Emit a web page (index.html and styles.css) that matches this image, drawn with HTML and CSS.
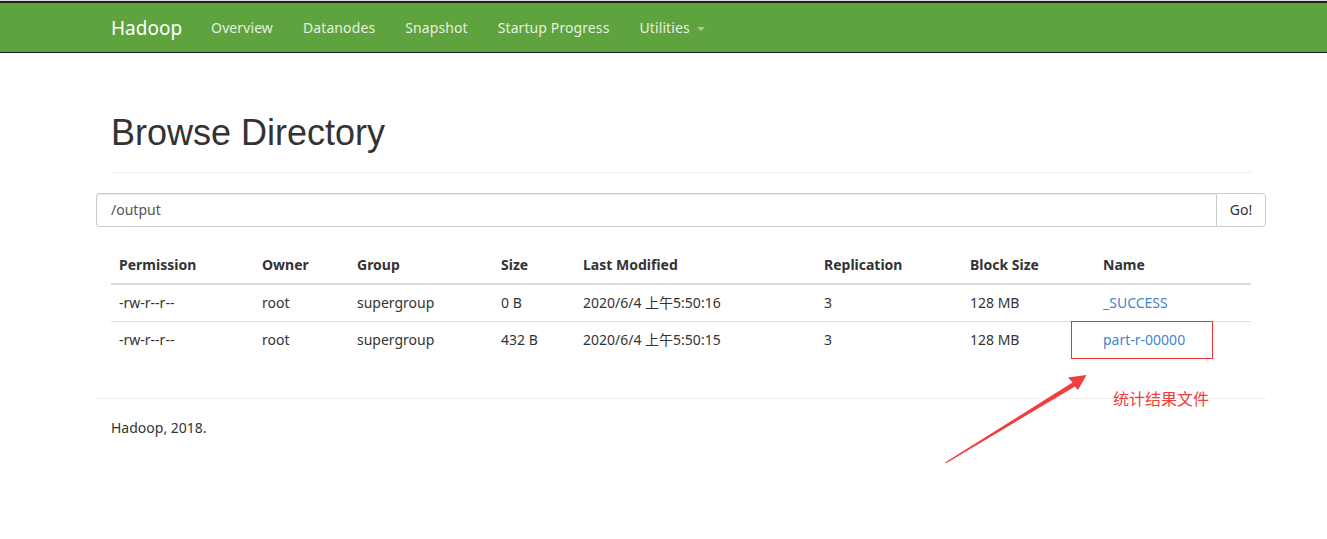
FILE: index.html
```html
<!DOCTYPE html>
<html>
<head>
<meta charset="utf-8">
<title>Browsing HDFS</title>
<link rel="stylesheet" href="styles.css">
</head>
<body>
<header class="navbar">
  <div class="nav-inner">
    <a class="brand" href="#">Hadoop</a>
    <ul class="nav-links">
      <li><a href="#">Overview</a></li>
      <li><a href="#">Datanodes</a></li>
      <li><a href="#">Snapshot</a></li>
      <li><a href="#">Startup Progress</a></li>
      <li><a href="#">Utilities <span class="caret"></span></a></li>
    </ul>
  </div>
</header>

<main class="container">
  <div class="page-header">
    <h1>Browse Directory</h1>
  </div>

  <div class="input-group">
    <input class="path-input" type="text" value="/output">
    <button class="go-btn" type="button">Go!</button>
  </div>

  <div class="table-wrap">
    <table class="listing">
      <thead>
        <tr>
          <th class="c-perm">Permission</th>
          <th class="c-owner">Owner</th>
          <th class="c-group">Group</th>
          <th class="c-size">Size</th>
          <th class="c-mod">Last Modified</th>
          <th class="c-rep">Replication</th>
          <th class="c-block">Block Size</th>
          <th>Name</th>
        </tr>
      </thead>
      <tbody>
        <tr>
          <td>-rw-r--r--</td>
          <td>root</td>
          <td>supergroup</td>
          <td>0 B</td>
          <td>2020/6/4 上午5:50:16</td>
          <td>3</td>
          <td>128 MB</td>
          <td><a href="#">_SUCCESS</a></td>
        </tr>
        <tr>
          <td>-rw-r--r--</td>
          <td>root</td>
          <td>supergroup</td>
          <td>432 B</td>
          <td>2020/6/4 上午5:50:15</td>
          <td>3</td>
          <td>128 MB</td>
          <td><a href="#">part-r-00000</a></td>
        </tr>
      </tbody>
    </table>
  </div>

  <hr class="footer-rule">
  <div class="footer">
    <p>Hadoop, 2018.</p>
  </div>
</main>

<div class="annotation">
  <div class="mark-text">统计结果文件</div>
  <svg class="mark-arrow" width="1327" height="539" viewBox="0 0 1327 539">
    <rect x="1071.5" y="321.5" width="141" height="37" fill="none" stroke="#f03030" stroke-width="1"/>
    <polygon points="945,462.5 1072.5,382.5 1068,377.5 1086.5,375 1078,390 1075,386.5 946.5,463" fill="#f13d3d"/>
  </svg>
</div>
</body>
</html>
```

FILE: styles.css
```css
html, body {
  margin: 0;
  padding: 0;
  background: #fff;
}

body {
  font-family: "Noto Sans", "Noto Sans CJK SC", sans-serif;
  font-size: 14px;
  line-height: 20px;
  color: #333;
  border-top: 1px solid #dcdcdc;
  position: relative;
  min-height: 538px;
}

a {
  color: #3f85cc;
  text-decoration: none;
}

/* Navbar */
.navbar {
  background: #5fa33e;
  border-top: 2px solid #1e1e1e;
  border-bottom: 1px solid #1e1e1e;
  height: 49px;
}

.nav-inner {
  margin-left: 96px;
  width: 1170px;
  padding: 0 15px;
  box-sizing: border-box;
  display: flex;
  align-items: center;
  height: 49px;
}

.brand {
  color: #fff;
  font-size: 19px;
  line-height: 20px;
  padding-right: 14px;
}

.nav-links {
  list-style: none;
  margin: 0;
  padding: 0;
  display: flex;
}

.nav-links a {
  display: block;
  padding: 0 15px;
  color: #e6efe1;
  font-size: 14px;
  line-height: 20px;
  letter-spacing: 0.1px;
}

.caret {
  display: inline-block;
  width: 0;
  height: 0;
  margin-left: 3px;
  vertical-align: middle;
  border-top: 4px solid #a9c99a;
  border-left: 4px solid transparent;
  border-right: 4px solid transparent;
}

/* Container */
.container {
  margin-left: 96px;
  width: 1170px;
}

.page-header {
  display: flow-root;
  margin: 40px 15px 20px;
  padding-bottom: 9px;
  border-bottom: 1px solid #eee;
}

.page-header h1 {
  font-family: "Liberation Sans", Arial, sans-serif;
  font-weight: 400;
  font-size: 36px;
  line-height: 1.1;
  margin: 20px 0 10px;
  color: #333;
}

.input-group {
  display: flex;
  height: 34px;
}

.path-input {
  flex: 1;
  height: 34px;
  box-sizing: border-box;
  border: 1px solid #ccc;
  border-right: 0;
  border-radius: 4px 0 0 4px;
  padding: 6px 14px;
  font-family: "Noto Sans", sans-serif;
  font-size: 14px;
  color: #555;
  box-shadow: inset 0 1px 1px rgba(0,0,0,.075);
  outline: none;
}

.go-btn {
  width: 50px;
  height: 34px;
  box-sizing: border-box;
  border: 1px solid #ccc;
  border-radius: 0 4px 4px 0;
  background: #fff;
  font-family: "Noto Sans", sans-serif;
  font-size: 14px;
  color: #333;
  padding: 0;
}

/* Table */
.table-wrap {
  display: flow-root;
  padding: 20px 15px 0;
}

.listing {
  width: 100%;
  border-collapse: collapse;
  margin-bottom: 20px;
}

.listing th, .listing td {
  text-align: left;
  padding: 8px;
  line-height: 20px;
  vertical-align: top;
}

.listing th {
  font-weight: 700;
  border-bottom: 2px solid #ddd;
}

.listing td {
  border-top: 1px solid #ddd;
}

.listing tbody tr:first-child td {
  border-top: 0;
}

.c-perm { width: 127px; }
.c-owner { width: 79px; }
.c-group { width: 128px; }
.c-size { width: 66px; }
.c-mod { width: 225px; }
.c-rep { width: 130px; }
.c-block { width: 117px; }

/* Footer */
.footer-rule {
  margin: 20px 0 19px;
  border: 0;
  border-top: 1px solid #eee;
}

.footer {
  padding: 0 15px;
}

.footer p {
  margin: 0;
}

/* Annotation overlay */
.annotation {
  position: absolute;
  left: 0;
  top: -1px;
  width: 1327px;
  height: 539px;
  pointer-events: none;
}

.mark-text {
  position: absolute;
  left: 1113px;
  top: 388px;
  font-family: "Noto Sans CJK SC", sans-serif;
  font-size: 16px;
  line-height: 20px;
  color: #f03c3c;
}

.mark-arrow {
  position: absolute;
  left: 0;
  top: 0;
}
```
